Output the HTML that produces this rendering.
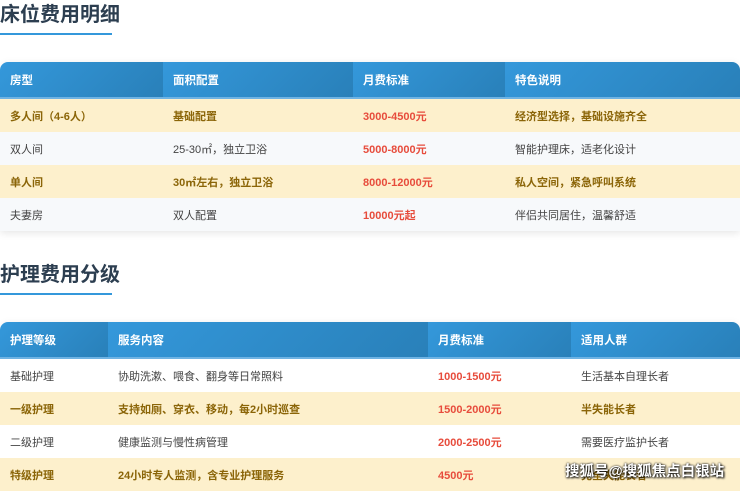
<!DOCTYPE html>
<html><head><meta charset="utf-8"><style>
*{margin:0;padding:0;box-sizing:border-box}
body{width:740px;height:487px;overflow:hidden;background:#fff;font-family:"Liberation Sans","Noto Sans CJK SC",sans-serif;position:relative}
.t{position:absolute;left:0;font-size:20px;font-weight:bold;color:#2c3e50;line-height:28px}
.u{position:absolute;left:0;width:112px;height:2px;background:#3498db}
.tb{position:absolute;left:0;width:740px;border-radius:8px 8px 0 0;overflow:hidden;box-shadow:0 2px 8px rgba(0,0,0,.1)}
.r{display:flex;height:33px;align-items:center;font-size:11px;color:#444}
.h{height:37px;color:#fff;font-weight:bold;font-size:11.5px;border-bottom:2px solid #6fb3e3}
.h div{background:linear-gradient(135deg,#3498db,#2980b9);height:100%;display:flex;align-items:center}
.r div{padding-left:10px;height:100%;display:flex;align-items:center}
.y{background:#fdf0cc;color:#8b6508;font-weight:bold}
.g{background:#f7f9fb}
.w{background:#fff}
.p{color:#e74c3c;font-weight:bold}
.wm{position:absolute;left:565px;top:460px;font-size:14.5px;color:#fff;font-weight:bold;text-shadow:0 0 2px #000,1px 1px 2px #000;white-space:nowrap}
</style></head><body>
<div class="t" style="top:1px">床位费用明细</div>
<div class="u" style="top:33px"></div>
<div class="tb" style="top:62px">
<div class="r h"><div style="width:163px">房型</div><div style="width:190px">面积配置</div><div style="width:152px">月费标准</div><div style="width:235px">特色说明</div></div>
<div class="r y"><div style="width:163px">多人间（4-6人）</div><div style="width:190px">基础配置</div><div style="width:152px" class="p">3000-4500元</div><div style="width:235px">经济型选择，基础设施齐全</div></div>
<div class="r g"><div style="width:163px">双人间</div><div style="width:190px">25-30㎡，独立卫浴</div><div style="width:152px" class="p">5000-8000元</div><div style="width:235px">智能护理床，适老化设计</div></div>
<div class="r y"><div style="width:163px">单人间</div><div style="width:190px">30㎡左右，独立卫浴</div><div style="width:152px" class="p">8000-12000元</div><div style="width:235px">私人空间，紧急呼叫系统</div></div>
<div class="r g"><div style="width:163px">夫妻房</div><div style="width:190px">双人配置</div><div style="width:152px" class="p">10000元起</div><div style="width:235px">伴侣共同居住，温馨舒适</div></div>
</div>
<div class="t" style="top:261px">护理费用分级</div>
<div class="u" style="top:293px"></div>
<div class="tb" style="top:322px">
<div class="r h"><div style="width:108px">护理等级</div><div style="width:320px">服务内容</div><div style="width:143px">月费标准</div><div style="width:169px">适用人群</div></div>
<div class="r w"><div style="width:108px">基础护理</div><div style="width:320px">协助洗漱、喂食、翻身等日常照料</div><div style="width:143px" class="p">1000-1500元</div><div style="width:169px">生活基本自理长者</div></div>
<div class="r y"><div style="width:108px">一级护理</div><div style="width:320px">支持如厕、穿衣、移动，每2小时巡查</div><div style="width:143px" class="p">1500-2000元</div><div style="width:169px">半失能长者</div></div>
<div class="r w"><div style="width:108px">二级护理</div><div style="width:320px">健康监测与慢性病管理</div><div style="width:143px" class="p">2000-2500元</div><div style="width:169px">需要医疗监护长者</div></div>
<div class="r y"><div style="width:108px">特级护理</div><div style="width:320px">24小时专人监测，含专业护理服务</div><div style="width:143px" class="p">4500元</div><div style="width:169px">完全失能长者</div></div>
</div>
<div class="wm">搜狐号@搜狐焦点白银站</div>
</body></html>
